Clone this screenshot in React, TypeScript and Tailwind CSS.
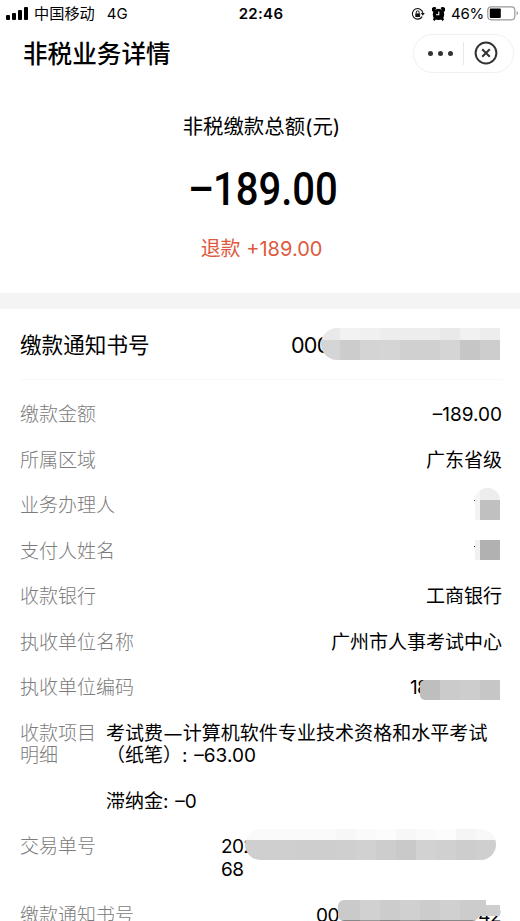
import type { ReactNode } from 'react';

interface MosaicProps {
  className: string;
  rows: { height: string; cells: string[] }[];
}

// 打码色块：每个单元格 20px 宽
function Mosaic({ className, rows }: MosaicProps) {
  return (
    <div className={`absolute overflow-hidden ${className}`}>
      {rows.map((row, i) => (
        <div key={i} className={`flex ${row.height}`}>
          {row.cells.map((color, j) => (
            <div key={j} className={`h-full shrink-0 ${j === 0 ? 'grow' : 'w-5'} ${color}`} />
          ))}
        </div>
      ))}
    </div>
  );
}

interface RowProps {
  label: string;
  children?: ReactNode;
}

function Row({ label, children }: RowProps) {
  return (
    <div className="relative flex justify-between">
      <span className="font-light text-[#7c7c7c]">{label}</span>
      <span>{children}</span>
    </div>
  );
}

function StatusBar() {
  return (
    <div className="relative flex h-[27px] items-center justify-between pr-px pl-1.5 text-[15px]">
      <div className="flex items-center">
        <div className="flex h-[13px] w-[22px] items-end gap-[2px]">
          <i className="h-[5px] w-1 rounded-[1px] bg-black" />
          <i className="h-[7px] w-1 rounded-[1px] bg-black" />
          <i className="h-[10px] w-1 rounded-[1px] bg-black" />
          <i className="h-[13px] w-1 rounded-[1px] bg-black" />
        </div>
        <span className="ml-1.5 pt-px text-[15.2px]">中国移动</span>
        <span className="ml-3 pt-px">4G</span>
      </div>
      <div className="absolute inset-x-0 pt-px pl-[2px] text-center text-[15px] font-semibold tracking-[0.3px]">22:46</div>
      <div className="flex items-center">
        <svg width="14" height="14" viewBox="0 0 14 14" className="mr-[7px]" fill="none" stroke="#111">
          <path d="M11.2 9.6A5.3 5.3 0 1 1 11.9 6" strokeWidth="1.1" />
          <path d="M9.8 6h4l-2 2.8z" fill="#111" stroke="none" />
          <path d="M4.3 6.4h4.8v3.6H4.3z" fill="#111" stroke="none" />
          <path d="M5.3 6.6V5.2a1.4 1.4 0 0 1 2.8 0v1.4" />
        </svg>
        <svg width="13" height="14" viewBox="0 0 13 14" className="mr-[6px]">
          <circle cx="6.5" cy="7.4" r="5.7" />
          <path d="M.3 4.2A2.6 2.6 0 0 1 4.4 1L2 5zM12.7 4.2A2.6 2.6 0 0 0 8.6 1L11 5zM2 10l2 2.4L2.4 14 1 12.6zM11 10l-2 2.4 1.6 1.6 1.4-1.4z" />
          <path d="M6.8 4.4v3.4H4" fill="none" stroke="#fff" strokeWidth="1.1" />
        </svg>
        <span className="w-[34px] pt-px whitespace-nowrap tracking-[-0.2px]">46%</span>
        <svg width="32" height="15" viewBox="0 0 32 15" className="ml-[2px]">
          <rect x=".8" y=".8" width="27" height="13" rx="3.2" fill="#fff" stroke="#999" strokeWidth="1.2" />
          <rect x="2.8" y="2.6" width="11" height="9.4" rx="1" />
          <path d="M29.6 5v4.6a2.6 2.6 0 0 0 0-4.6z" fill="#999" />
        </svg>
      </div>
    </div>
  );
}

function NavBar() {
  return (
    <div className="flex h-[54px] items-center justify-between pr-[6px] pl-[23px]">
      <h1 className="text-[24.6px] font-medium">非税业务详情</h1>
      <div className="mb-[2px] flex h-[39px] w-[101px] items-center rounded-full border border-[#f0f0f0]">
        <div className="flex w-[49px] justify-center gap-[5px] pl-1">
          <i className="size-[5px] rounded-full bg-[#333]" />
          <i className="size-[5px] rounded-full bg-[#333]" />
          <i className="size-[5px] rounded-full bg-[#333]" />
        </div>
        <div className="h-[23px] w-px bg-[#e8e8e8]" />
        <svg width="24" height="24" viewBox="0 0 24 24" className="ml-[10px]" fill="none" stroke="#333" strokeWidth="2">
          <circle cx="12" cy="12" r="10.4" />
          <path d="M8.2 8.2l7.6 7.6M15.8 8.2l-7.6 7.6" />
        </svg>
      </div>
    </div>
  );
}

export default function App() {
  return (
    <div className="h-[921px] w-[520px] overflow-hidden bg-white font-[Inter,'Noto_Sans_CJK_SC',sans-serif] text-black">
      <StatusBar />
      <NavBar />

      {/* 金额汇总 */}
      <section className="flex h-[212px] flex-col items-center pl-[3px]">
        <div className="mt-[31px] text-[20.4px] leading-[30px]">非税缴款总额(元)</div>
        <div className="mt-[21px] flex h-[52px] w-[148px] items-center font-[Roboto,sans-serif] text-[46px] font-medium">
          <span className="w-[25px] shrink-0 origin-left scale-x-[0.88]">–</span>
          <span className="w-[123px] origin-left scale-x-[0.87] whitespace-nowrap">189.00</span>
        </div>
        <div className="mt-[19px] text-[20px] leading-[30px] text-[#dc5b3e]">退款 +189.00</div>
      </section>

      <div className="h-4 bg-[#f4f4f4]" />

      <section className="pr-[18px] pl-5">
        <div className="relative flex h-[71px] items-center justify-between border-b border-[#f9f9f9] pt-[2px] text-[21.6px]">
          <span>缴款通知书号</span>
          <span className="w-[211px] tracking-[-0.8px]">000</span>
          <Mosaic
            className="top-[19px] right-[2px] h-8 w-[179px] rounded-l-[16px]"
            rows={[
              { height: 'h-3', cells: ['bg-[#e9e9e9]', 'bg-[#f2f2f2]', 'bg-[#f0f0f0]', 'bg-[#ededed]', 'bg-[#ededed]', 'bg-[#ededed]', 'bg-[#e9e9e9]', 'bg-[#f1f1f1]', 'bg-[#ededed]'] },
              { height: 'h-5', cells: ['bg-[#d5d5d5]', 'bg-[#cccccc]', 'bg-[#d4d4d4]', 'bg-[#d5d5d5]', 'bg-[#d0d0d0]', 'bg-[#d0d0d0]', 'bg-[#d5d5d5]', 'bg-[#c6c6c6]', 'bg-[#cdcdcd]'] },
            ]}
          />
        </div>

        {/* 明细列表 */}
        <div className="flex flex-col gap-[22.75px] pt-6 text-[19px] leading-[22.75px]">
          <Row label="缴款金额">–189.00</Row>
          <Row label="所属区域">广东省级</Row>
          <Row label="业务办理人">
            <Mosaic
              className="top-[-7px] right-[2px] h-8 w-[25px] rounded-t-[12px]"
              rows={[
                { height: 'h-3', cells: ['bg-[#f5f5f5]', 'bg-[#ededed]'] },
                { height: 'h-5', cells: ['bg-[#f3f3f3]', 'bg-[#c0c0c0]'] },
              ]}
            />
            <i className="absolute top-[5px] right-[27px] size-px bg-[#555]" />
          </Row>
          <Row label="支付人姓名">
            <Mosaic
              className="top-[-0.5px] right-[2px] h-5 w-[25px]"
              rows={[{ height: 'h-5', cells: ['bg-[#f1f1f1]', 'bg-[#b1b1b1]'] }]}
            />
            <i className="absolute top-[5.5px] right-[27px] size-px bg-[#222]" />
          </Row>
          <Row label="收款银行">工商银行</Row>
          <Row label="执收单位名称">广州市人事考试中心</Row>
          <Row label="执收单位编码">
            <span className="block w-[92px] tracking-[-0.8px]">18</span>
            <Mosaic
              className="top-[3px] right-[2px] h-5 w-20 rounded-l-[5px]"
              rows={[{ height: 'h-5', cells: ['bg-[#bebebe]', 'bg-[#cbcbcb]', 'bg-[#cdcdcd]', 'bg-[#c6c6c6]'] }]}
            />
          </Row>
          <div className="flex">
            <div className="w-[86px] shrink-0 pr-[9px] font-light text-[#7c7c7c]">收款项目明细</div>
            <div className="whitespace-nowrap">
              <p className="flex h-[22.75px] tracking-[0.05px]">
                <span>考试费</span>
                <span className="w-[19.5px] text-center text-[17px]">—</span>
                <span>计算机软件专业技术资格和水平考试</span>
              </p>
              <p className="h-[22.75px]">
                （纸笔）<span className="[word-spacing:1.5px]">: –63.00</span>
              </p>
              <p className="mt-[22.75px] h-[22.75px]">
                滞纳金<span className="[word-spacing:1.5px]">: –0</span>
              </p>
            </div>
          </div>
          <Row label="交易单号">
            <span className="block w-[281px] tracking-[-0.6px]">
              202
              <br />
              68
            </span>
            <Mosaic
              className="top-[-7px] right-[6px] h-[31px] w-[251px] rounded-[16px]"
              rows={[
                { height: 'h-[11px]', cells: ['bg-[#fafafa]', 'bg-[#fafafa]', 'bg-[#fafafa]', 'bg-[#fafafa]', 'bg-[#f7f7f7]', 'bg-[#fafafa]', 'bg-[#fcfcfc]', 'bg-[#f7f7f7]', 'bg-[#fafafa]', 'bg-[#fcfcfc]', 'bg-[#f5f5f5]', 'bg-[#f8f8f8]'] },
                { height: 'h-5', cells: ['bg-[#cfcfcf]', 'bg-[#cfcfcf]', 'bg-[#cecece]', 'bg-[#cecece]', 'bg-[#cfcfcf]', 'bg-[#d1d1d1]', 'bg-[#cdcdcd]', 'bg-[#c9c9c9]', 'bg-[#d2d2d2]', 'bg-[#d0d0d0]', 'bg-[#cdcdcd]', 'bg-[#cfcfcf]'] },
              ]}
            />
          </Row>
          <Row label="缴款通知书号">
            <span className="flex w-[186px] justify-between pr-px tracking-[-0.5px]">
              <span>00</span>
              <span>42</span>
            </span>
            <Mosaic
              className="top-[-4.5px] right-[22px] h-[21px] w-[142px] rounded-l-[6px] rounded-br-[8px]"
              rows={[
                { height: 'h-5', cells: ['bg-[#cacaca]', 'bg-[#d1d1d1]', 'bg-[#cccccc]', 'bg-[#d0d0d0]', 'bg-[#cccccc]', 'bg-[#d0d0d0]', 'bg-[#cccccc]'] },
                { height: 'h-px', cells: ['bg-[#888]', 'bg-[#999]', 'bg-[#888]', 'bg-[#999]', 'bg-[#777]', 'bg-[#888]', 'bg-[#888]'] },
              ]}
            />
            <Mosaic
              className="top-[-4.5px] right-[16px] h-[16px] w-[10px]"
              rows={[{ height: 'h-4', cells: ['bg-[#cccccc]'] }]}
            />
            <Mosaic
              className="top-[0.5px] right-[2px] h-[11px] w-[14px]"
              rows={[{ height: 'h-[11px]', cells: ['bg-[#cecece]'] }]}
            />
          </Row>
        </div>
      </section>
    </div>
  );
}
